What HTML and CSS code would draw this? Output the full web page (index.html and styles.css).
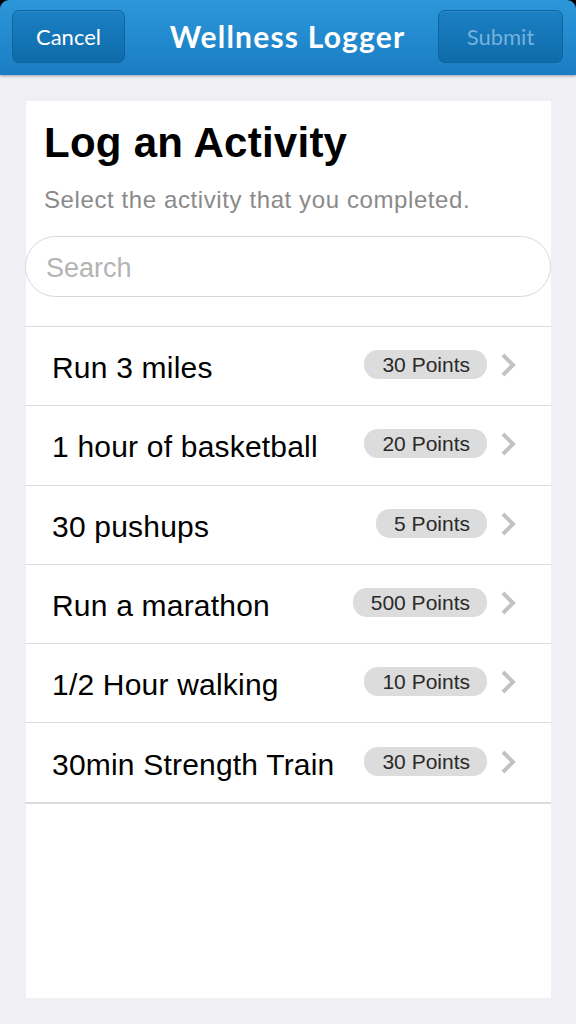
FILE: index.html
```html
<!DOCTYPE html>
<html>
<head>
<meta charset="utf-8">
<link rel="stylesheet" href="styles.css">
</head>
<body>
<div class="topframe">
  <header class="navbar">
    <button class="navbtn cancel">Cancel</button>
    <h1 class="navtitle">Wellness Logger</h1>
    <button class="navbtn submit">Submit</button>
  </header>
</div>
<main class="card">
  <h2 class="heading">Log an Activity</h2>
  <p class="subtitle">Select the activity that you completed.</p>
  <div class="search">Search</div>
  <ul class="list">
    <li class="row"><span class="label">Run 3 miles</span><span class="badge">30 Points</span><svg class="chev" viewBox="0 0 18 26"><polyline points="3,3 13,13 3,23"/></svg></li>
    <li class="row"><span class="label">1 hour of basketball</span><span class="badge">20 Points</span><svg class="chev" viewBox="0 0 18 26"><polyline points="3,3 13,13 3,23"/></svg></li>
    <li class="row"><span class="label">30 pushups</span><span class="badge">5 Points</span><svg class="chev" viewBox="0 0 18 26"><polyline points="3,3 13,13 3,23"/></svg></li>
    <li class="row"><span class="label">Run a marathon</span><span class="badge">500 Points</span><svg class="chev" viewBox="0 0 18 26"><polyline points="3,3 13,13 3,23"/></svg></li>
    <li class="row"><span class="label">1/2 Hour walking</span><span class="badge">10 Points</span><svg class="chev" viewBox="0 0 18 26"><polyline points="3,3 13,13 3,23"/></svg></li>
    <li class="row"><span class="label">30min Strength Train</span><span class="badge">30 Points</span><svg class="chev" viewBox="0 0 18 26"><polyline points="3,3 13,13 3,23"/></svg></li>
  </ul>
</main>
</body>
</html>
```
FILE: styles.css
```css
html, body {
  margin: 0;
  padding: 0;
}
body {
  width: 576px;
  height: 1024px;
  background: #efeff4;
  font-family: "Liberation Sans", Arial, sans-serif;
  display: flex;
  flex-direction: column;
  overflow: hidden;
}
.topframe {
  background: #000;
  position: relative;
  z-index: 2;
}
.navbar {
  height: 75px;
  box-sizing: border-box;
  display: grid;
  grid-template-columns: 1fr auto 1fr;
  align-items: center;
  padding: 0 13px 0 12px;
  border-radius: 9px 9px 0 0;
  background: linear-gradient(#2c97da, #1a7dc3);
  box-shadow: 0 1px 3px rgba(0, 0, 0, 0.35);
}
.navbtn {
  height: 53px;
  margin-top: -3px;
  border-radius: 7px;
  border: 1px solid #0f64a0;
  background: linear-gradient(#1b80c4, #0f6ba9);
  box-shadow: inset 0 1px 0 rgba(255, 255, 255, 0.08);
  font-family: Lato, "Open Sans", sans-serif;
  font-size: 22px;
  padding: 0;
}
.cancel {
  width: 113px;
  justify-self: start;
  color: #ffffff;
}
.submit {
  width: 125px;
  justify-self: end;
  color: #74b2dd;
}
.navtitle {
  margin: -3px 0 0 0;
  font-family: Lato, "Open Sans", sans-serif;
  font-weight: 700;
  font-size: 30px;
  color: #ffffff;
  letter-spacing: 1.2px;
}
.card {
  margin: 26px 25px 26px 26px;
  flex: 1;
  background: #fff;
  display: flex;
  flex-direction: column;
}
.heading {
  margin: 21px 0 0 18px;
  font-size: 42px;
  line-height: 42px;
  font-weight: 700;
  color: #000;
  letter-spacing: 0.25px;
}
.subtitle {
  margin: 24px 0 0 18px;
  font-size: 24px;
  line-height: 24px;
  color: #8a8a8a;
  letter-spacing: 0.6px;
}
.search {
  margin: 24px 0 0 -1px;
  height: 61px;
  box-sizing: border-box;
  border: 1.5px solid #d9d9d9;
  border-radius: 31px;
  padding: 3px 0 0 20px;
  display: flex;
  align-items: center;
  font-size: 27px;
  color: #b4b4b4;
}
.list {
  list-style: none;
  margin: 29px 0 0 -1px;
  padding: 0;
  border-bottom: 2px solid #dcdcdc;
}
.row {
  height: 79.3px;
  box-sizing: border-box;
  border-top: 1.5px solid #dcdcdc;
  display: flex;
  align-items: center;
  padding: 0 33px 0 27px;
}
.label {
  flex: 1;
  font-size: 30px;
  letter-spacing: 0.2px;
  color: #000;
  padding-top: 4px;
}
.badge {
  background: #dcdcdc;
  border-radius: 14px;
  height: 29px;
  line-height: 29px;
  padding: 0 17px 0 18px;
  font-size: 21px;
  color: #2a2a2a;
  margin-right: 13px;
  margin-top: -3px;
}
.chev {
  width: 18px;
  height: 28px;
  margin-top: -2px;
}
.chev polyline {
  fill: none;
  stroke: #c2c2c2;
  stroke-width: 4;
}
```
